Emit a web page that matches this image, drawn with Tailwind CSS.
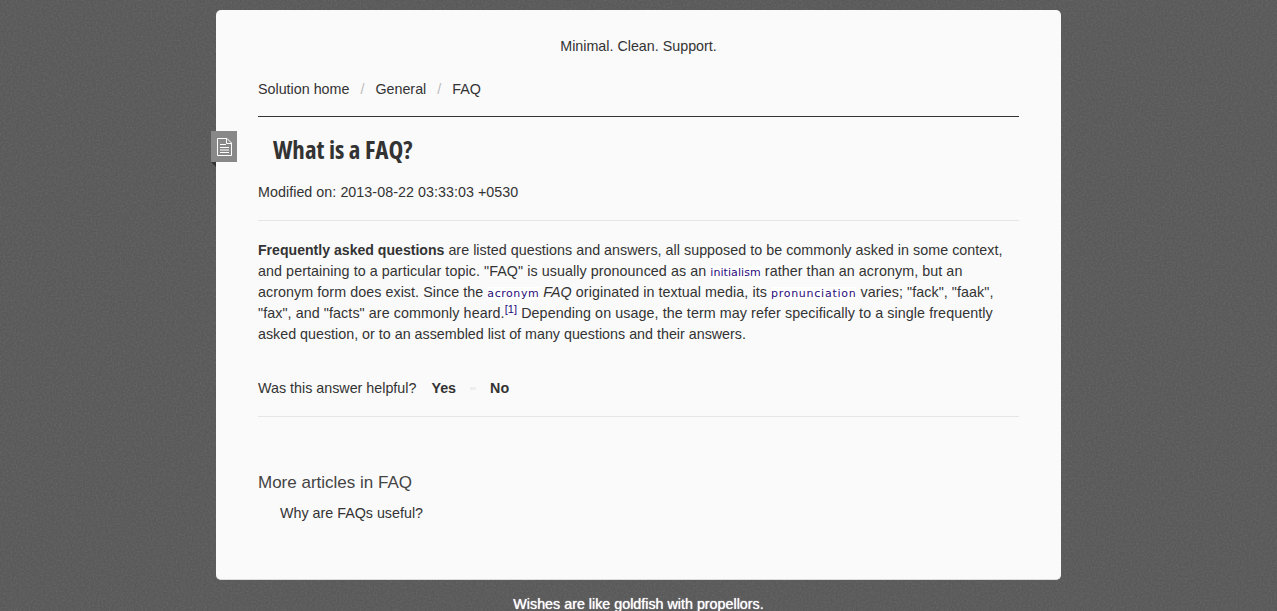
<!DOCTYPE html>
<html lang="en">
<head>
  <meta charset="UTF-8" />
  <title>What is a FAQ?</title>
  <script src="https://cdn.jsdelivr.net/npm/@tailwindcss/browser@4"></script>
</head>
<body class="relative h-[611px] overflow-hidden bg-[#595959] font-['Liberation_Sans',sans-serif] text-[14.3px] leading-[21px] text-[#333]">

  <!-- grainy page background -->
  <svg class="absolute inset-0 h-full w-full" aria-hidden="true">
    <filter id="grain">
      <feTurbulence type="fractalNoise" baseFrequency="0.55" numOctaves="2" seed="4" />
      <feColorMatrix values="0 0 0 0 0.25  0 0 0 0 0.25  0 0 0 0 0.25  0.9 0 0 0 -0.3" />
    </filter>
    <rect width="100%" height="100%" filter="url(#grain)" opacity="0.5" />
  </svg>

  <main class="relative mx-auto mt-[10px] h-[570px] w-[845px] rounded-[5px] border-b border-[#ddd] bg-[#fafafa] px-[42px] pt-[26px]">
    <p class="text-center">Minimal. Clean. Support.</p>

    <nav class="mt-[22px] flex h-[38px] items-start border-b border-[#333]">
      <a>Solution home</a>
      <span class="mx-[11px] text-[#bbb]">/</span>
      <a>General</a>
      <span class="mx-[11px] text-[#bbb]">/</span>
      <a>FAQ</a>
    </nav>

    <!-- page icon tab hanging off the card edge -->
    <div class="absolute left-[-5px] top-[121px] flex h-[31px] w-[26px] items-center justify-center bg-[#888]">
      <svg width="15" height="18" viewBox="0 0 15 18" fill="none" stroke="#fff" stroke-width="1">
        <path d="M.5 .5h9.5l4.5 4.5v12.5h-14z" />
        <path d="M9.5 .5v5h5M3 6.5h6M3 9.5h9M3 12h9M3 14.5h9" />
      </svg>
    </div>
    <div class="absolute left-[-5px] top-[152px] h-0 w-0 border-l-[5px] border-t-[5px] border-l-transparent border-t-[#333]"></div>

    <h1 class="mt-[14px] pl-[15px] font-['Open_Sans',sans-serif] text-[25px] leading-[36px] font-bold font-stretch-condensed text-[#333]">What is a FAQ?</h1>
    <p class="mt-[15px] h-[38px] tracking-[0.04px]">Modified on: 2013-08-22 03:33:03 +0530</p>
    <hr class="border-[#e5e5e5]" />

    <p class="mt-[19px]">
      <b class="text-[14.1px]">Frequently asked questions</b> <span class="tracking-[0.03px]">are listed questions and answers, all supposed to be commonly asked in some context,</span><br />
      <span class="tracking-[0.07px]">and pertaining to a particular topic. "FAQ" is usually pronounced as an <a class="bg-white font-['DejaVu_Sans',sans-serif] text-[11px] leading-none text-[#2a0a7a]">initialism</a> rather than an acronym, but an</span><br />
      <span class="tracking-[0.06px]">acronym form does exist. Since the <a class="bg-white font-['DejaVu_Sans',sans-serif] text-[11px] leading-none tracking-[0.55px] text-[#2a0a7a]">acronym</a> <i>FAQ</i> originated in textual media, its <a class="bg-white font-['DejaVu_Sans',sans-serif] text-[11px] leading-none tracking-[0.75px] text-[#2a0a7a]">pronunciation</a> varies; "fack", "faak",</span><br />
      <span class="tracking-[0.08px]">"fax", and "facts" are commonly heard.<sup class="text-[11px] leading-none text-[#1a0a7a]">[1]</sup> Depending on usage, the term may refer specifically to a single frequently</span><br />
      asked question, or to an assembled list of many questions and their answers.
    </p>

    <div class="mt-[33px] flex h-[39px] items-start border-b border-[#e5e5e5]">
      <span>Was this answer helpful?</span>
      <b class="ml-[15px]">Yes</b>
      <span class="ml-[14px] mt-[9px] h-[3px] w-[6px] bg-[#eee]"></span>
      <b class="ml-[14px]">No</b>
    </div>

    <h2 class="mt-[52px] text-[17px] leading-[27px] font-normal text-[#444]">More articles in FAQ</h2>
    <p class="mt-[7px] pl-[22px]">Why are FAQs useful?</p>
  </main>

  <p class="relative mt-[14px] text-center text-white [text-shadow:0_0_1px_#fff]">Wishes are like goldfish with propellors.</p>
</body>
</html>
